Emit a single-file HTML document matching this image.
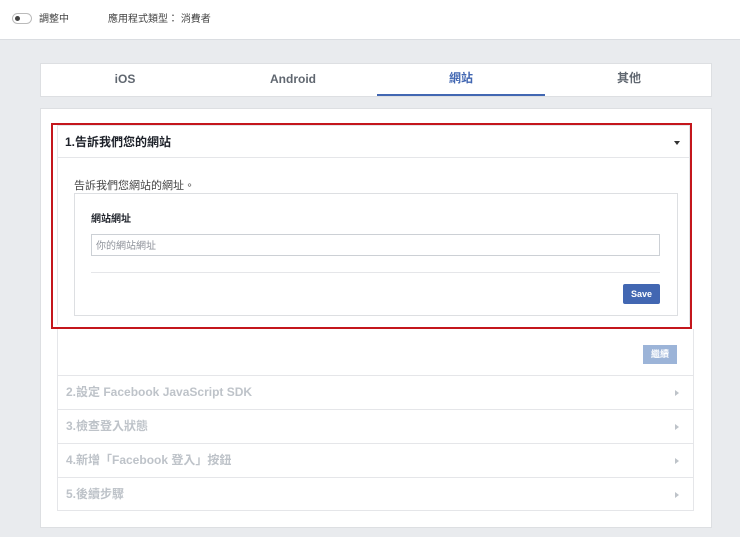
<!DOCTYPE html><html><head><meta charset="utf-8"><style>
*{margin:0;padding:0;box-sizing:border-box}
body{width:740px;height:537px;background:#e9ebee;font-family:"Liberation Sans","Noto Sans CJK TC",sans-serif;position:relative;overflow:hidden;color:#1d2129;line-height:1.2}
.a{position:absolute}
.top{left:0;top:0;width:740px;height:40px;background:#fff;border-bottom:1px solid #dadde1}
.tog{left:12px;top:13px;width:20px;height:11px;border:1px solid #bbb;border-radius:6px;background:#fff}
.tog:after{content:"";position:absolute;left:2px;top:2px;width:5px;height:5px;border-radius:50%;background:#444}
.t{font-size:10px;color:#444;line-height:12px}
.tabs{left:40px;top:63px;width:672px;height:34px;background:#fff;border:1px solid #dddfe2}
.tab{top:8px;font-size:12px;font-weight:bold;color:#606770;width:168px;text-align:center;line-height:14px}
.card{left:40px;top:108px;width:672px;height:420px;background:#fff;border:1px solid #dddfe2}
.red{left:51px;top:123px;width:641px;height:206px;border:2px solid #c4161c}
.row{left:57px;width:637px;border:1px solid #e5e6e9;border-top:none;font-size:12px;font-weight:bold;color:#bec3c9;padding-left:8px}
.arr{position:absolute;right:14px;top:14px;width:0;height:0;border-left:4px solid #bec3c9;border-top:3px solid transparent;border-bottom:3px solid transparent}
</style></head><body>
<div class="a top"></div>
<div class="a tog"></div>
<div class="a t" style="left:39px;top:14px">調整中</div>
<div class="a t" style="left:108px;top:14px">應用程式類型： 消費者</div>
<div class="a tabs">
<div class="a tab" style="left:0">iOS</div>
<div class="a tab" style="left:168px">Android</div>
<div class="a tab" style="left:336px;color:#4267b2;top:7px">網站</div>
<div class="a tab" style="left:504px;top:7px">其他</div>
<div class="a" style="left:336px;top:30px;width:168px;height:2px;background:#4267b2"></div>
</div>
<div class="a card"></div>
<div class="a" style="left:57px;top:125px;width:633px;height:200px;border:1px solid #e5e6e9;border-bottom:none"></div>
<div class="a" style="left:57px;top:157px;width:633px;border-top:1px solid #e5e6e9"></div>
<div class="a" style="left:65px;top:135px;font-size:12px;font-weight:bold;line-height:14px">1.告訴我們您的網站</div>
<div class="a" style="left:674px;top:141px;border-top:4px solid #333;border-left:3.5px solid transparent;border-right:3.5px solid transparent"></div>
<div class="a" style="left:74px;top:180px;font-size:11px;color:#444;line-height:13px">告訴我們您網站的網址。</div>
<div class="a" style="left:74px;top:193px;width:604px;height:123px;border:1px solid #dddfe2"></div>
<div class="a" style="left:91px;top:214px;font-size:10px;font-weight:bold;line-height:12px">網站網址</div>
<div class="a" style="left:91px;top:234px;width:569px;height:22px;border:1px solid #ccd0d5;font-size:10px;color:#90949c;padding:2px 4px 0;line-height:20px">你的網站網址</div>
<div class="a" style="left:91px;top:272px;width:569px;border-top:1px solid #e5e6e9"></div>
<div class="a" style="left:623px;top:284px;width:37px;height:20px;background:#4267b2;color:#fff;font-size:9px;font-weight:bold;text-align:center;line-height:20px;border-radius:2px">Save</div>
<div class="a" style="left:57px;top:329px;width:637px;height:47px;border:1px solid #e5e6e9;border-top:none"></div>
<div class="a" style="left:643px;top:345px;width:34px;height:19px;background:#9cb4d8;color:#fff;font-size:9px;font-weight:bold;text-align:center;line-height:19px">繼續</div>
<div class="a row" style="top:376px;height:34px;line-height:33px">2.設定 Facebook JavaScript SDK<span class="arr"></span></div>
<div class="a row" style="top:410px;height:34px;line-height:33px">3.檢查登入狀態<span class="arr"></span></div>
<div class="a row" style="top:444px;height:34px;line-height:33px">4.新增「Facebook 登入」按鈕<span class="arr"></span></div>
<div class="a row" style="top:478px;height:33px;line-height:32px">5.後續步驟<span class="arr"></span></div>
<div class="a red"></div>
</body></html>
